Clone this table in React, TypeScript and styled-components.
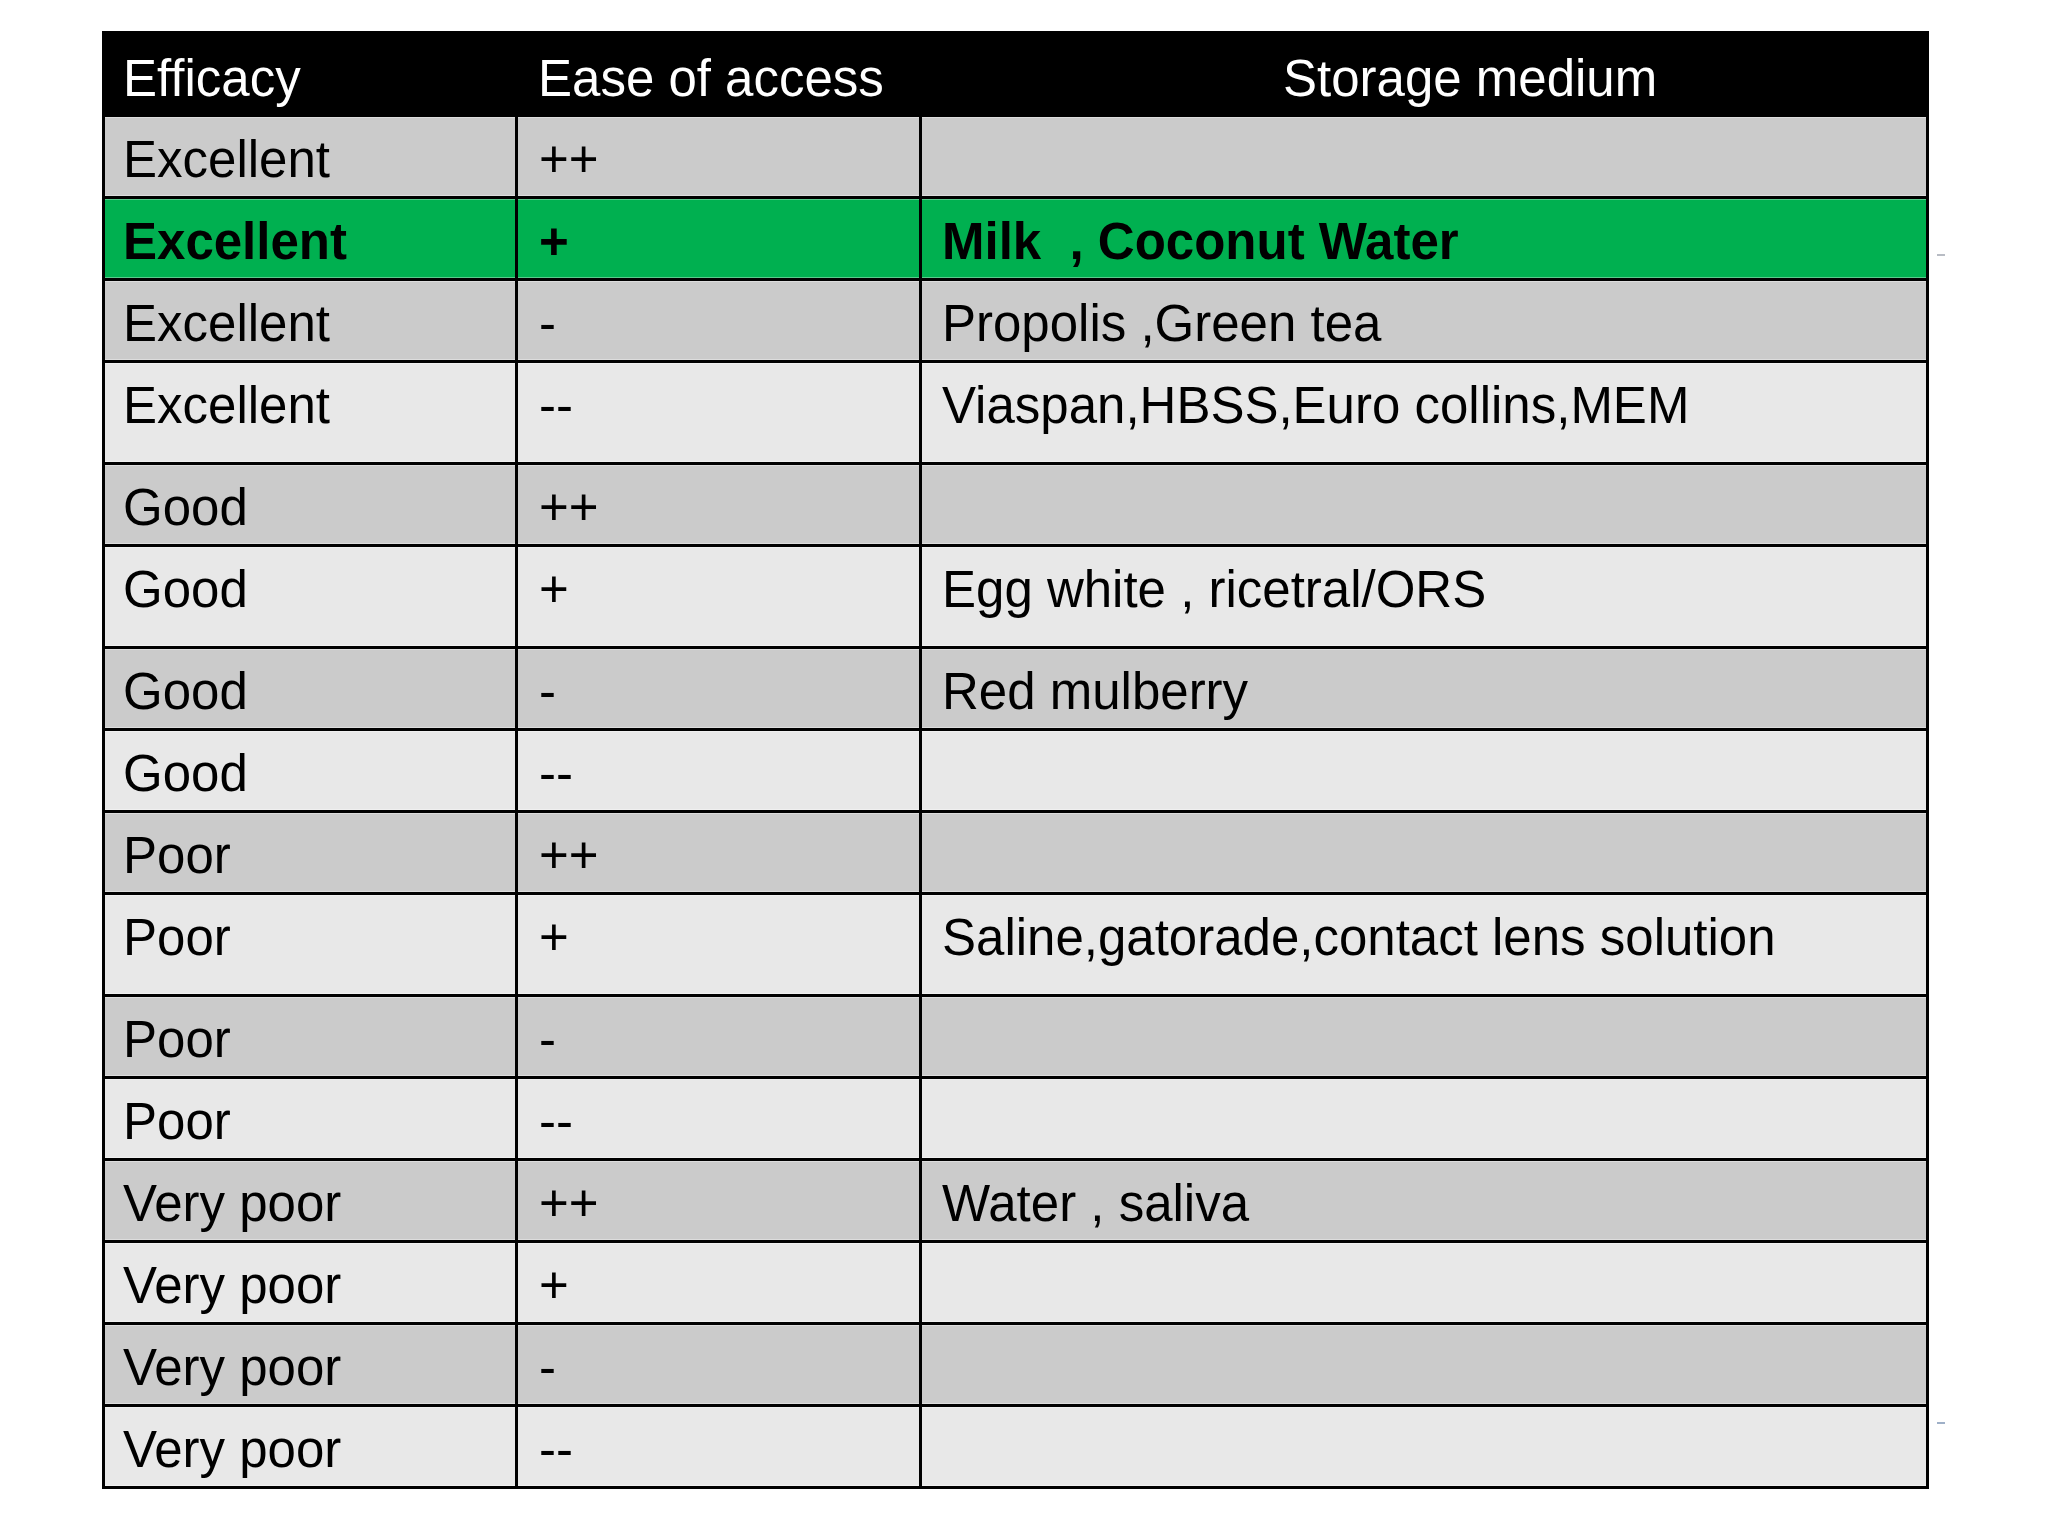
import React from "react";
import styled, { createGlobalStyle } from "styled-components";

const GlobalStyle = createGlobalStyle`
  html, body {
    margin: 0;
    padding: 0;
    background: #ffffff;
  }
  body {
    font-family: "Liberation Sans", Arial, sans-serif;
  }
`;

const Page = styled.div`
  width: 2048px;
  height: 1536px;
  background: #ffffff;
  padding: 31px 0 0 102px;
  box-sizing: border-box;
`;

const TableWrap = styled.div`
  position: relative;
  width: 1827px;
`;

const Table = styled.div`
  display: grid;
  grid-template-columns: 410px 401px 1004px;
  grid-auto-rows: auto;
  gap: 3px;
  padding: 3px;
  background: #000000;
  font-family: "Liberation Sans", Arial, sans-serif;
  font-size: 51px;
  line-height: 58px;
  color: #000000;
`;

type Tone = "head" | "grey" | "light" | "green";

const toneBg: Record<Tone, string> = {
  head: "#000000",
  grey: "#cbcbcb",
  light: "#e8e8e8",
  green: "#00b050",
};

const Cell = styled.div<{ $tone: Tone; $tall?: boolean; $indent?: number }>`
  background: ${(p) => toneBg[p.$tone]};
  color: ${(p) => (p.$tone === "head" ? "#ffffff" : "#000000")};
  font-weight: ${(p) => (p.$tone === "green" ? 700 : 400)};
  height: ${(p) => (p.$tall ? "99px" : p.$tone === "head" ? "80px" : "79px")};
  padding: ${(p) => (p.$tone === "head" ? "15.5px" : "13.5px")} 18px 0
    ${(p) => (p.$indent !== undefined ? p.$indent : 18)}px;
  box-sizing: border-box;
  white-space: pre;
  overflow: hidden;
  box-shadow: ${(p) =>
    p.$tone === "head"
      ? "none"
      : "inset 0 1px 0 rgba(255,255,255,0.35), inset 0 -1px 0 rgba(255,255,255,0.35)"};
`;

const Mark = styled.div<{ $top: number; $color: string }>`
  position: absolute;
  left: 1835px;
  top: ${(p) => p.$top}px;
  width: 8px;
  height: 2px;
  background: ${(p) => p.$color};
`;

type Row = { eff: string; ease: string; medium: string; tall?: boolean };

const rows: Row[] = [
  { eff: "Excellent", ease: "++", medium: "" },
  { eff: "Excellent", ease: "+", medium: "Milk  , Coconut Water" },
  { eff: "Excellent", ease: "-", medium: "Propolis ,Green tea" },
  { eff: "Excellent", ease: "--", medium: "Viaspan,HBSS,Euro collins,MEM", tall: true },
  { eff: "Good", ease: "++", medium: "" },
  { eff: "Good", ease: "+", medium: "Egg white , ricetral/ORS", tall: true },
  { eff: "Good", ease: "-", medium: "Red mulberry" },
  { eff: "Good", ease: "--", medium: "" },
  { eff: "Poor", ease: "++", medium: "" },
  { eff: "Poor", ease: "+", medium: "Saline,gatorade,contact lens solution", tall: true },
  { eff: "Poor", ease: "-", medium: "" },
  { eff: "Poor", ease: "--", medium: "" },
  { eff: "Very poor", ease: "++", medium: "Water , saliva" },
  { eff: "Very poor", ease: "+", medium: "" },
  { eff: "Very poor", ease: "-", medium: "" },
  { eff: "Very poor", ease: "--", medium: "" },
];

export default function App() {
  return (
    <>
      <GlobalStyle />
      <Page>
        <TableWrap>
          <Table>
            <Cell $tone="head" $indent={18}>Efficacy</Cell>
            <Cell $tone="head" $indent={20}>Ease of access</Cell>
            <Cell $tone="head" $indent={361}>Storage medium</Cell>
            {rows.map((r, i) => {
              const tone: Tone = i === 1 ? "green" : i % 2 === 0 ? "grey" : "light";
              return (
                <React.Fragment key={i}>
                  <Cell $tone={tone} $tall={r.tall} $indent={18}>{r.eff}</Cell>
                  <Cell $tone={tone} $tall={r.tall} $indent={21}>{r.ease}</Cell>
                  <Cell $tone={tone} $tall={r.tall} $indent={20}>{r.medium}</Cell>
                </React.Fragment>
              );
            })}
          </Table>
          <Mark $top={223} $color="#b8bcc4" />
          <Mark $top={1391} $color="#9fb0c8" />
        </TableWrap>
      </Page>
    </>
  );
}
